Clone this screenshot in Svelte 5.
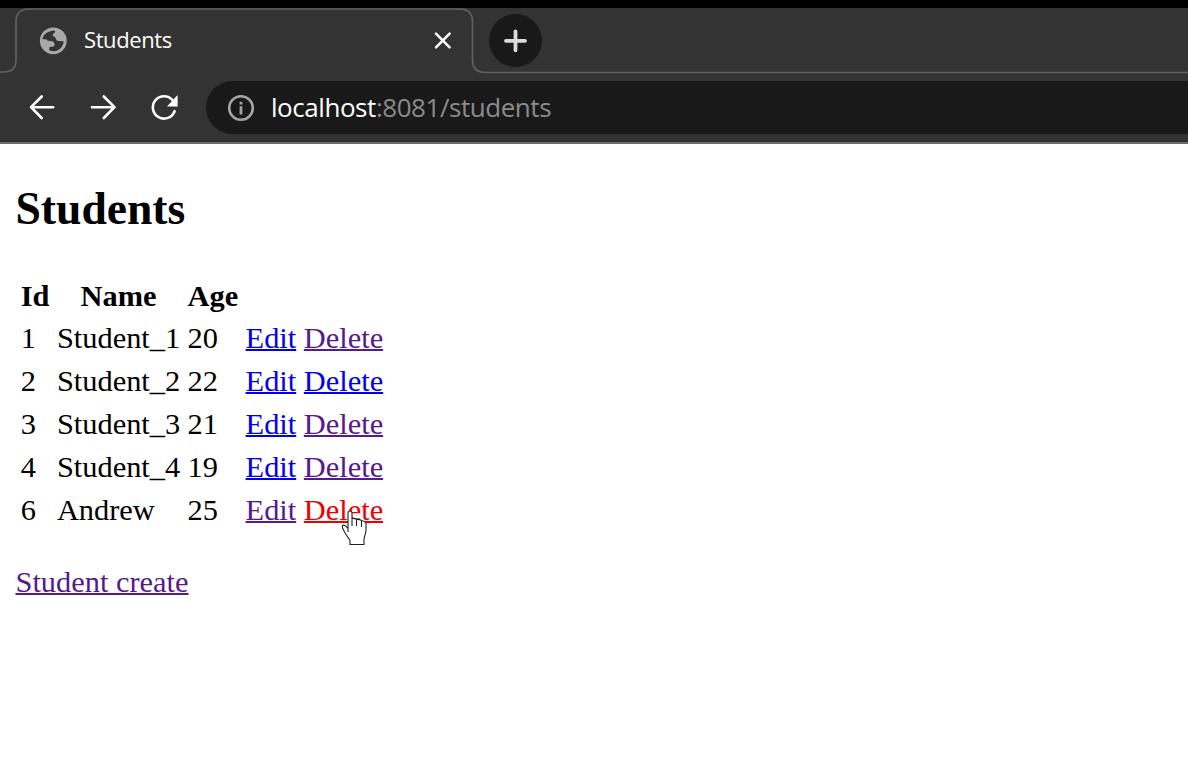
<script lang="ts">
  const students = [
    { id: 1, name: 'Student_1', age: 20, edit: '', del: 'visited' },
    { id: 2, name: 'Student_2', age: 22, edit: '', del: '' },
    { id: 3, name: 'Student_3', age: 21, edit: '', del: 'visited' },
    { id: 4, name: 'Student_4', age: 19, edit: '', del: 'visited' },
    { id: 6, name: 'Andrew', age: 25, edit: 'visited', del: 'active' }
  ];
</script>

<div class="window">
  <header class="chrome">
    <div class="tabs">
      <svg class="outline" width="1188" height="66" viewBox="0 0 1188 66" fill="none" stroke="#626262" stroke-width="1.6">
        <path d="M-2 64H4Q16 64 16 52V14Q16 1 29 1H460Q472.500 1 472.500 14V52Q472.500 64.500 486 64.500H1190" />
      </svg>
      <div class="tab">
        <svg width="28" height="28" viewBox="0 0 28 28">
          <circle cx="14.300" cy="13.800" r="13.400" fill="#a9a9a9" />
          <path d="M3.500 12.300C4.200 7.500 8.500 3.800 15.300 3.400L16.300 4.500Q15.800 6.300 13.800 7V9Q16.500 9.300 16.700 11.500Q17 13.600 19.500 13.900L24.700 14.200C24.300 19.300 20.500 23.700 14.800 24.200L10.300 23.400V20.600Q11.200 19.400 13 19.800Q15.600 20 15.600 18Q15.600 14.200 11.500 14L8.500 13.800L7.500 12.300Z" fill="#333" />
        </svg>
        <span class="title">Students</span>
        <svg class="close" width="18" height="18" viewBox="0 0 18 18" stroke="#fff" stroke-width="2.500" stroke-linecap="round"><path d="M2 1.700L15.600 15.300M15.600 1.700L2 15.300" /></svg>
      </div>
      <div class="new-tab">
        <svg width="24" height="24" viewBox="0 0 24 24" stroke="#dcdcdc" stroke-width="3.800" stroke-linecap="round"><path d="M11.500 2.300V21.300M2 11.800H21" /></svg>
      </div>
    </div>
    <div class="toolbar">
      <svg width="28" height="28" viewBox="0 0 28 28" fill="none" stroke="#fff" stroke-width="2.600" stroke-linecap="round" stroke-linejoin="round"><path d="M25.200 13.200H3M13.700 2.500L3 13.200L13.700 24" /></svg>
      <svg width="28" height="28" viewBox="0 0 28 28" fill="none" stroke="#fff" stroke-width="2.600" stroke-linecap="round" stroke-linejoin="round"><path d="M3 13.200H25.500M14.800 2.500L25.500 13.200L14.800 24" /></svg>
      <svg width="28" height="28" viewBox="0 0 28 28"><path d="M24.600 17.200A11.200 11.200 0 1 1 22.500 6" fill="none" stroke="#fff" stroke-width="2.600" stroke-linecap="round" /><path d="M27.600 1V12.500H17Z" fill="#fff" /></svg>
      <div class="address">
        <svg width="28" height="28" viewBox="0 0 28 28"><circle cx="14" cy="14" r="11.800" fill="none" stroke="#a3a3a3" stroke-width="2.600" /><path d="M12.600 7.800h2.800v2.600h-2.800zM12.600 12.200h2.800v8.300h-2.800z" fill="#a3a3a3" /></svg>
        <span class="url"><b>localhost</b>:8081/students</span>
      </div>
    </div>
  </header>

  <main>
    <h2>Students</h2>
    <table>
      <thead>
        <tr><th>Id</th><th>Name</th><th>Age</th></tr>
      </thead>
      <tbody>
        {#each students as s}
          <tr>
            <td>{s.id}</td>
            <td>{s.name}</td>
            <td>{s.age}</td>
            <td><a href="#edit" class={s.edit}>Edit</a>{' '}<a href="#delete" class={s.del}>Delete</a></td>
          </tr>
        {/each}
      </tbody>
    </table>
    <p><a href="#create" class="visited">Student create</a></p>
  </main>

  <svg class="pointer" width="26" height="36" viewBox="0 0 26 36">
    <path d="M7 23V3Q7 1 9 1Q11 1 11 3V9Q13 7 15.500 9Q18 8 20 10.500Q25 9.500 25 14V21L23 29V34.500H9V31L4 24L1 18V15.500Q4 14 7 19Z" fill="#fff" />
    <path d="M7 22V3Q7 1 9 1Q11 1 11 3V16M7 18.500Q4 14 1.500 15.500V18L4 23L9 30.500V34.500H23V29L25 21V13Q24 11 20.500 10.500V17M11 8.500Q14 8 15.500 9.500V16M15.500 9.500Q18 9 20.500 10.500" fill="none" stroke="#222" stroke-width="1.100" />
  </svg>
</div>

<style>
  :global(body) { margin: 0; background: #fff; }
  .window { position: relative; width: 1188px; height: 780px; overflow: hidden; background: #fff; }
  .chrome {
    box-sizing: border-box;
    height: 144px;
    border-top: 8px solid #000;
    border-bottom: 2px solid #6c6c6c;
    background: #333;
    font-family: "Open Sans", "Noto Sans", sans-serif;
  }
  .tabs { position: relative; display: flex; align-items: center; height: 65px; }
  .outline { position: absolute; left: 0; top: 0; }
  .tab { display: flex; align-items: center; box-sizing: border-box; width: 489px; padding-left: 39px; }
  .title { margin-left: 17px; padding-bottom: 3px; font-size: 22px; line-height: 30px; letter-spacing: -0.4px; color: #fff; }
  .close { margin-left: auto; margin-right: 37px; }
  .new-tab { display: flex; align-items: center; justify-content: center; width: 53px; height: 53px; border-radius: 50%; background: #191919; }
  .toolbar { display: flex; align-items: center; gap: 33px; height: 53px; padding: 8px 0 8px 27.500px; }
  .address { display: flex; align-items: center; flex: 1; height: 53px; margin-left: -4.500px; padding-left: 21px; border-radius: 27px 0 0 27px; background: #191919; }
  .url { margin-left: 16px; padding-bottom: 1px; font-size: 26px; line-height: 36px; letter-spacing: -0.45px; color: #8b8b8b; white-space: nowrap; }
  .url b { font-weight: 400; color: #fff; }

  main { padding: 38.5px 15.5px 0; font: 30.4px "Liberation Serif", serif; color: #000; }
  h2 { margin: 0 0 38.5px; font-size: 45.6px; line-height: 52px; }
  table { margin-left: -0.4px; border-spacing: 4px; }
  th, td { padding: 2px 1.7px; line-height: 35px; white-space: nowrap; }
  td { padding-top: 1px; padding-bottom: 3px; }
  a { color: #0000ee; text-decoration: underline; text-decoration-thickness: 2px; }
  a.visited { color: #551a8b; }
  a.active { color: #ee0000; }
  p { margin: 29.5px 0 0; }
  .pointer { position: absolute; left: 341px; top: 510px; }
</style>
